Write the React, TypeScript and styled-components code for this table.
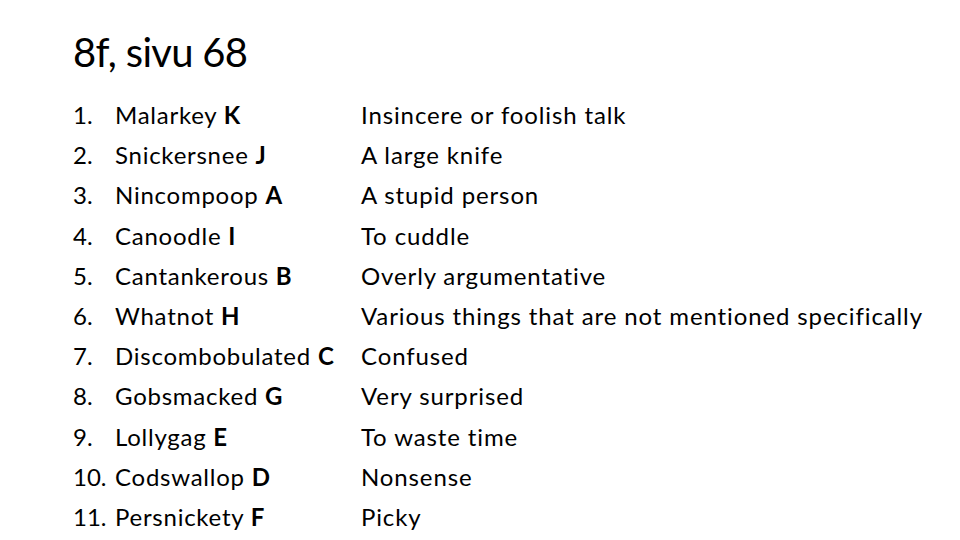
import React from 'react';
import styled, {createGlobalStyle} from 'styled-components';

interface Word {
    term: string,
    letter: string,
    meaning: string
}

const words: Word[] = [
    {term: 'Malarkey', letter: 'K', meaning: 'Insincere or foolish talk'},
    {term: 'Snickersnee', letter: 'J', meaning: 'A large knife'},
    {term: 'Nincompoop', letter: 'A', meaning: 'A stupid person'},
    {term: 'Canoodle', letter: 'I', meaning: 'To cuddle'},
    {term: 'Cantankerous', letter: 'B', meaning: 'Overly argumentative'},
    {term: 'Whatnot', letter: 'H', meaning: 'Various things that are not mentioned specifically'},
    {term: 'Discombobulated', letter: 'C', meaning: 'Confused'},
    {term: 'Gobsmacked', letter: 'G', meaning: 'Very surprised'},
    {term: 'Lollygag', letter: 'E', meaning: 'To waste time'},
    {term: 'Codswallop', letter: 'D', meaning: 'Nonsense'},
    {term: 'Persnickety', letter: 'F', meaning: 'Picky'},
]

const GlobalStyle = createGlobalStyle`
  html, body {
    margin: 0;
    background: #ffffff;
  }
`

export default function App() {
    return (
        <>
            <GlobalStyle/>
            <Slide>
                <Title>8f, sivu 68</Title>
                <List>
                    {words.map((w, i) => (
                        <Row key={w.term}>
                            <Num>{i + 1}.</Num>
                            <Term>{w.term} <b>{w.letter}</b></Term>
                            <Meaning>{w.meaning}</Meaning>
                        </Row>
                    ))}
                </List>
            </Slide>
        </>
    );
}

const Slide = styled.div`
  width: 960px;
  height: 540px;
  overflow: hidden;
  box-sizing: border-box;
  padding: 26px 0 0 73px;
  font-family: Lato, "Open Sans", sans-serif;
  color: #000;
`

const Title = styled.h1`
  margin: 0;
  font-size: 40px;
  font-weight: 400;
  line-height: 52px;
  letter-spacing: -0.7px;
`

const List = styled.div`
  margin-top: 17px;
  display: flex;
  flex-direction: column;
`

const Row = styled.div`
  display: grid;
  grid-template-columns: 42px 246px auto;
  height: 40.2px;
  line-height: 40px;
  font-size: 24px;
  letter-spacing: 0.75px;
  white-space: nowrap;

  b {
    font-weight: 700;
  }
`

const Num = styled.span`
  letter-spacing: 0;
`

const Term = styled.span``

const Meaning = styled.span`
  letter-spacing: 0.88px;
`
